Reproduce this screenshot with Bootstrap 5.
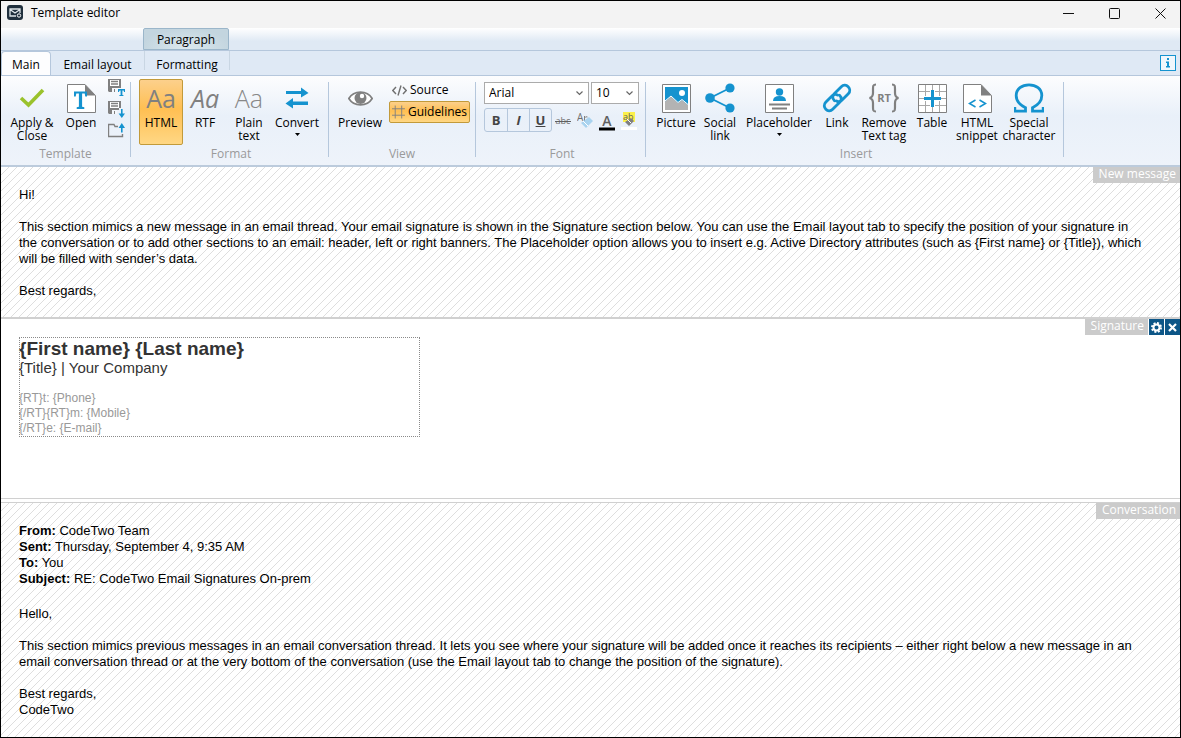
<!DOCTYPE html>
<html lang="en">
<head>
<meta charset="utf-8">
<meta name="viewport" content="width=device-width, initial-scale=1">
<title>Template editor</title>
<link href="https://cdn.jsdelivr.net/npm/bootstrap@5.3.0/dist/css/bootstrap.min.css" rel="stylesheet">
<style>
  :root { --accent:#1593cf; --icon:#808080; --rule:#b5c7dc; --ui:"Open Sans","Noto Sans",sans-serif; }
  body { font-family:var(--ui); font-size:12px; line-height:16px; color:#000; background:#fff; }
  .win { border:1px solid #000; }
  .titlebar { height:27px; background:#f3f3f3; padding:0 0 4px 6px; }
  .win-btn { width:46px; height:22px; background:none; border:0; padding:0 0 0 6px; }
  .context-row { height:23px; background:linear-gradient(#fff,#dfe9f4 60%); border-bottom:1px solid var(--rule); padding-left:142px; }
  .context-tab { width:86px; padding-top:3px; border:1px solid #9bb6ca; border-radius:2px 2px 0 0; background:radial-gradient(ellipse at 50% 100%,#dce9ee,#c3d5df 75%); }
  .tab-row { height:25px; background:#dfe9f5; border-bottom:1px solid var(--rule); }
  .rib-tab { color:#000; height:24px; padding-top:6px; }
  .tab-main { width:50px; background:#fdfdfe; border:1px solid var(--rule); border-bottom:0; border-radius:4px 4px 0 0; padding-top:5px; }
  .tab-mail { width:93px; }
  .tab-format { width:86px; height:19px; border:solid #c9d6e3; border-width:0 1px; }
  .info { width:16px; height:16px; border:1px solid var(--accent); background:#f0f7fc; padding:0; }
  .ribbon { height:91px; background:linear-gradient(#fdfdfe,#e9f0f9 45%,#eef3fa); border-bottom:2px solid #bccbdc; }
  .rgroup { position:relative; padding:3px 6px 3px 8px; }
  .rgroup-tight { padding-left:5px; }
  .rgroup::after { content:""; position:absolute; right:0; top:6px; bottom:8px; width:1px; background:var(--rule); }
  .rtitle { color:#9a9a9a; line-height:16px; }
  .tool { border:1px solid transparent; background:none; border-radius:2px; height:66px; padding:2px 0 0; line-height:13px; color:#000; display:flex; flex-direction:column; align-items:center; white-space:nowrap; }
  .tool .pic { height:32px; width:32px; display:flex; align-items:center; justify-content:center; margin-bottom:2px; }
  .tool.picked, .mini.picked { border-color:#c29a3a; background:linear-gradient(#fcd08c,#ffbf52 45%,#ffd784); }
  .w42 { width:42px; } .w44 { width:44px; } .w46 { width:46px; } .w52 { width:52px; } .w58 { width:58px; } .w74 { width:74px; }
  .aa { font-size:25px; line-height:32px; color:var(--icon); }
  .aa-thin { color:#888; font-weight:300; }
  .view-list { width:81px; margin-left:3px; }
  .mini { height:22px; border:1px solid transparent; border-radius:2px; background:none; padding:0 2px; gap:3px; color:#000; white-space:nowrap; }
  .plain-btn { border:0; background:none; padding:0; line-height:0; }
  .combos { gap:2px; padding-top:3px; }
  .combo { height:22px; border:1px solid #ababab; padding:0 4px; appearance:none; color:#000; background:#fff url("data:image/svg+xml,%3Csvg xmlns='http://www.w3.org/2000/svg' width='7' height='5'%3E%3Cpath d='M.5.5l3 3 3-3' fill='none' stroke='%23666' stroke-width='1.2'/%3E%3C/svg%3E") no-repeat right 5px center; }
  .combo-font { width:105px; } .combo-size { width:48px; }
  .biu { border:1px solid var(--rule); border-radius:3px; }
  .biu button { width:22px; height:22px; border:0; background:none; padding:0; color:#444; font-size:13px; }
  .biu button + button { border-left:1px solid var(--rule); }
  .fx { width:22px; height:24px; border:0; background:none; padding:0; line-height:0; }
  .pane { position:relative; font-family:"Liberation Sans",Arial,sans-serif; font-size:13px; line-height:16px; padding:20px 32px 0 18px; }
  .pane p { margin-bottom:16px; }
  .hatch { background-color:#fff; background-image:linear-gradient(135deg,transparent 45%,#dedede 50%,transparent 55%); background-size:8px 8px; }
  .pane-top { padding-bottom:2px; border-bottom:2px solid #d0d0d0; }
  .pane-sign { min-height:180px; padding-top:18px; border-bottom:1px solid #d0d0d0; margin-bottom:3px; }
  .pane-conv { border-top:1px solid #d0d0d0; }
  .pane .mail-head { margin-bottom:19px; }
  .tagline { position:absolute; top:0; right:0; font-family:var(--ui); font-size:12px; line-height:16px; height:16px; }
  .taglabel { background:#cbcbcb; color:#fff; padding:0 4px 0 6px; height:16px; line-height:14px; }
  .tagbtn { width:15px; height:16px; border:0; padding:0; margin-left:1px; background:#0d5687; line-height:0; }
  .sig { width:401px; padding:1px 0; outline:1px dotted #8a8a8a; outline-offset:-1px; color:#333; }
  .sig-name { font-size:19px; line-height:22px; font-weight:700; margin:0; }
  .sig-title { font-size:15px; line-height:16px; }
  .sig-info { font-size:12px; line-height:15px; color:#999; margin-top:15px; }
</style>
</head>
<body>
<div class="win d-flex flex-column min-vh-100">
  <header class="titlebar d-flex align-items-center">
    <svg width="16" height="15" viewBox="0 0 16 15"><rect width="16" height="15" rx="3" fill="#20303d"/><path d="M9 11H3V4h10v4M3 4.500l5 3.500 5-3.500" fill="none" stroke="#dfe6ea" stroke-width="1.300"/><circle cx="12" cy="10.500" r="1.700" fill="#20303d" stroke="#fff"/></svg>
    <span class="ps-1 ms-1">Template editor</span>
    <div class="ms-auto d-flex">
      <button class="win-btn" aria-label="Minimize"><svg width="11" height="11" viewBox="0 0 11 11"><path d="M0 5.500h11" stroke="#111"/></svg></button>
      <button class="win-btn" aria-label="Maximize"><svg width="11" height="11" viewBox="0 0 11 11"><rect x=".5" y=".5" width="10" height="10" rx="1" fill="none" stroke="#111"/></svg></button>
      <button class="win-btn" aria-label="Close"><svg width="11" height="11" viewBox="0 0 11 11"><path d="M.5.5l10 10M10.500.5l-10 10" stroke="#111"/></svg></button>
    </div>
  </header>

  <div class="context-row d-flex"><div class="context-tab text-center">Paragraph</div></div>
  <nav class="tab-row d-flex text-center">
    <a class="rib-tab tab-main text-decoration-none" href="#main">Main</a>
    <a class="rib-tab tab-mail text-decoration-none" href="#layout">Email layout</a>
    <a class="rib-tab tab-format text-decoration-none" href="#formatting">Formatting</a>
    <button class="info ms-auto me-1 mt-1 d-flex align-items-center justify-content-center" aria-label="Information"><svg width="6" height="10" viewBox="0 0 6 10"><path d="M2 0h2v2H2zM1 3.500h3V8h1v1.500H1V8h1V5H1z" fill="#1593cf"/></svg></button>
  </nav>

  <div class="ribbon d-flex">
    <section class="rgroup rgroup-tight d-flex flex-column">
      <div class="d-flex">
        <button class="tool w52"><span class="pic"><svg width="26" height="22" viewBox="0 0 26 22"><path d="M2 11l7.500 7L24 3" fill="none" stroke="#9ac22c" stroke-width="3.600"/></svg></span>Apply &amp;<br>Close</button>
        <button class="tool w46"><span class="pic"><svg width="29" height="29" viewBox="0 0 29 29"><path d="M.5.5H18l10.500 11v17H.5z" fill="#fff" stroke="#808080"/><path d="M18 .5l10.500 11H18z" fill="#808080"/><path d="M7 7.500h13v5h-1.700l-.6-3h-2.600v13.200l2.200.6V25h-7.600v-1.700l2.200-.6V9.500H9.300l-.6 3H7z" fill="#1593cf"/></svg></span>Open</button>
        <div class="d-flex flex-column gap-1 ps-1">
          <button class="plain-btn" aria-label="Save as template"><svg width="17" height="18" viewBox="0 0 17 18"><path d="M0 0h13v9H9v4H1l-1-1z" fill="#808080"/><path d="M2 1h9v6H2z" fill="#fff"/><path d="M3 2.500h7M3 5h7" stroke="#808080" stroke-width="1.500"/><path d="M4 9h5v4H7v-3H6v3H4z" fill="#f4f7fb"/><path d="M10 10h7v3h-1l-.4-1.500h-1.200V16h1v1h-4v-1h1.200v-4.500h-1L11 13h-1z" fill="#1593cf"/></svg></button>
          <button class="plain-btn" aria-label="Export"><svg width="17" height="18" viewBox="0 0 17 18"><path d="M0 0h13v7h-2v2H9v4H1l-1-1z" fill="#808080"/><path d="M2 1h9v6H2z" fill="#fff"/><path d="M3 2.500h7M3 5h7" stroke="#808080" stroke-width="1.500"/><path d="M4 9h5v4H7v-3H6v3H4z" fill="#f4f7fb"/><path d="M13 8h1.600v4.500H17L13.800 17l-3.200-4.500H13z" fill="#1593cf"/></svg></button>
          <button class="plain-btn" aria-label="Import"><svg width="17" height="15" viewBox="0 0 17 15"><path d="M10 3.500H7L6 1.500H.5v12h14V11" fill="none" stroke="#808080" stroke-width="1.400"/><path d="M13 9.500V5h-2.400l3.200-5L17 5h-2.400v4.500z" fill="#1593cf"/></svg></button>
        </div>
      </div>
      <div class="rtitle text-center mt-auto">Template</div>
    </section>

    <section class="rgroup d-flex flex-column">
      <div class="d-flex">
        <button class="tool w44 picked"><span class="pic aa">Aa</span>HTML</button>
        <button class="tool w44"><span class="pic aa fst-italic">Aa</span>RTF</button>
        <button class="tool w44"><span class="pic aa aa-thin">Aa</span>Plain<br>text</button>
        <button class="tool w52"><span class="pic"><svg width="24" height="22" viewBox="0 0 24 22"><path d="M1 4h15V.5L23.500 6 16 10.500V7H1zM23 14.500H8V11L.5 16.500 8 21.500v-3.500h15z" fill="#1593cf"/></svg></span>Convert<svg class="mt-1" width="5" height="3" viewBox="0 0 5 3"><path d="M0 0h5L2.500 3z"/></svg></button>
      </div>
      <div class="rtitle text-center mt-auto">Format</div>
    </section>

    <section class="rgroup rgroup-tight d-flex flex-column">
      <div class="d-flex">
        <button class="tool w52"><span class="pic"><svg width="25" height="17" viewBox="0 0 25 17"><path d="M.8 8.500C6 0 19 0 24.200 8.500 19 17 6 17 .8 8.500z" fill="#fff" stroke="#808080" stroke-width="1.700"/><circle cx="12.500" cy="8" r="6" fill="#808080"/><circle cx="14" cy="6" r="2.200" fill="#fff"/></svg></span>Preview</button>
        <div class="view-list d-flex flex-column">
          <button class="mini d-flex align-items-center"><svg width="15" height="11" viewBox="0 0 15 11"><path d="M4 2L.8 5.500 4 9M11 2l3.200 3.500L11 9M9 .5l-3 10" fill="none" stroke="#707070" stroke-width="1.400"/></svg>Source</button>
          <button class="mini picked d-flex align-items-center"><svg width="14" height="14" viewBox="0 0 14 14"><path d="M3.500 0v14M10.500 0v14M0 3.500h14M0 10.500h14" stroke="#808080"/></svg>Guidelines</button>
        </div>
      </div>
      <div class="rtitle text-center mt-auto">View</div>
    </section>

    <section class="rgroup d-flex flex-column">
      <div class="combos d-flex">
        <select class="combo combo-font" aria-label="Font"><option>Arial</option></select>
        <select class="combo combo-size" aria-label="Font size"><option>10</option></select>
      </div>
      <div class="d-flex mt-1">
        <div class="biu d-flex"><button class="fw-bold">B</button><button class="fw-bold fst-italic">I</button><button class="fw-bold text-decoration-underline">U</button></div>
        <button class="fx" aria-label="Strikethrough"><svg width="18" height="18" viewBox="0 0 18 18"><text x="9" y="13" text-anchor="middle" font-size="9" fill="#707070">abc</text><path d="M1 10.500h16" stroke="#606060"/></svg></button>
        <button class="fx" aria-label="Clear formatting"><svg width="16" height="20" viewBox="0 0 16 20"><text x="0" y="11" font-size="10" fill="#707070">A</text><path d="M7.500 6v5M7.500 8q1-2 3-1" stroke="#808080" fill="none"/><path d="M12 7l4 4-7 7-5-5z" fill="#a9d3ef"/><path d="M6 11l5 5" stroke="#fff"/></svg></button>
        <button class="fx" aria-label="Text colour"><svg width="16" height="22" viewBox="0 0 16 22"><text x="8" y="17" text-anchor="middle" font-size="14" font-weight="600" fill="#606060">A</text><path d="M0 18.500h16v3H0z"/></svg></button>
        <button class="fx" aria-label="Highlight"><svg width="16" height="22" viewBox="0 0 16 22"><path d="M2 3h12v10H2z" fill="#fcf04a"/><text x="2" y="11" font-size="9" fill="#606060">ab</text><path d="M10 9l3 3-5 5-4-4z" fill="#808080"/><path d="M6 10l4 4" stroke="#fff"/><path d="M0 18h16v3H0z" fill="#fff"/></svg></button>
      </div>
      <div class="rtitle text-center mt-auto">Font</div>
    </section>

    <section class="rgroup d-flex flex-column">
      <div class="d-flex">
        <button class="tool w44"><span class="pic"><svg width="29" height="29" viewBox="0 0 29 29"><path d="M.5.5h28v28H.5z" fill="#fff" stroke="#808080"/><path d="M3 3h23v23H3z" fill="#1593cf"/><circle cx="20" cy="9" r="3" fill="#fff"/><path d="M3 17.500l6-5 7 6.500 4-3 6 5V26H3z" fill="#b3b3b3"/><path d="M3 17l6-5 7 6.500 4-3 6 5" fill="none" stroke="#fff"/></svg></span>Picture</button>
        <button class="tool w44"><span class="pic"><svg width="30" height="30" viewBox="0 0 30 30"><path d="M25 5L5 15l20 10" fill="none" stroke="#1593cf" stroke-width="1.800"/><g fill="#1593cf"><circle cx="25" cy="5" r="4.600"/><circle cx="5" cy="15" r="4.800"/><circle cx="25" cy="25" r="4.600"/></g></svg></span>Social<br>link</button>
        <button class="tool w74"><span class="pic"><svg width="29" height="29" viewBox="0 0 29 29"><path d="M.5.5h28v28H.5z" fill="#fff" stroke="#808080"/><circle cx="14.500" cy="8" r="3.700" fill="#1593cf"/><path d="M8 17q0-5 6.500-5t6.500 5z" fill="#1593cf"/><path d="M4 20.500h21M7 24.500h15" stroke="#808080" stroke-width="1.800"/></svg></span>Placeholder<svg class="mt-1" width="5" height="3" viewBox="0 0 5 3"><path d="M0 0h5L2.500 3z"/></svg></button>
        <button class="tool w42"><span class="pic"><svg width="30" height="30" viewBox="0 0 30 30"><g fill="none" stroke="#1593cf" stroke-width="2.800" stroke-linecap="round"><path d="M12.500 17.800c-2.300-2.300-2.300-5 0-7.300l6.800-6.800c4.500-4.500 11.500 2.500 7 7l-6.500 6.500c-1.500 1.500-3.800 1.700-5.300.8"/><path d="M17.500 12.200c2.300 2.300 2.300 5 0 7.300l-6.800 6.800c-4.500 4.500-11.500-2.500-7-7l6.500-6.500c1.500-1.500 3.800-1.700 5.300-.8"/></g></svg></span>Link</button>
        <button class="tool w52"><span class="pic"><svg width="30" height="30" viewBox="0 0 30 30"><path d="M7 1.500C4 1.500 4 3 4 6v4c0 3-1 4.500-3.500 5C3 15.500 4 17 4 20v4c0 3 0 4.500 3 4.500M23 1.500c3 0 3 1.500 3 4.500v4c0 3 1 4.500 3.500 5-2.500.5-3.500 2-3.500 5v4c0 3 0 4.500-3 4.500" fill="none" stroke="#808080" stroke-width="2.200"/><text x="15" y="19" text-anchor="middle" font-size="11" font-weight="700" fill="#808080">RT</text></svg></span>Remove<br>Text tag</button>
        <button class="tool w44"><span class="pic"><svg width="29" height="29" viewBox="0 0 29 29"><path d="M.5.5h28v28H.5z" fill="#fff" stroke="#808080"/><path d="M7.500 1v27M21.500 1v27M1 7.500h27M1 21.500h27M14.500 1v27M1 14.500h27" stroke="#a8a8a8"/><path d="M14.500 6v17M6 14.500h17" stroke="#fff" stroke-width="5"/><path d="M14.500 6v17M6 14.500h17" stroke="#1593cf" stroke-width="3"/></svg></span>Table</button>
        <button class="tool w46"><span class="pic"><svg width="29" height="29" viewBox="0 0 29 29"><path d="M.5.5H18l10.500 11v17H.5z" fill="#fff" stroke="#808080"/><path d="M18 .5l10.500 11H18z" fill="#808080"/><path d="M12.500 16l-6 3.500 6 3.500M16.500 16l6 3.500-6 3.500" fill="none" stroke="#1593cf" stroke-width="1.500"/></svg></span>HTML<br>snippet</button>
        <button class="tool w58"><span class="pic"><svg width="30" height="30" viewBox="0 0 30 30"><path d="M.8 24v4.200h10.700v-3.500C6 22 2.200 18 2.200 12.500 2.200 6 8 1.800 15 1.800S27.800 6 27.800 12.500c0 5.500-3.800 9.500-9.300 12.200v3.500h10.700V24" fill="none" stroke="#1593cf" stroke-width="2.800"/></svg></span>Special<br>character</button>
      </div>
      <div class="rtitle text-center mt-auto">Insert</div>
    </section>
  </div>

  <section class="pane pane-top hatch">
    <div class="tagline d-flex"><span class="taglabel">New message</span></div>
    <p>Hi!</p>
    <p>This section mimics a new message in an email thread. Your email signature is shown in the Signature section below. You can use the Email layout tab to specify the position of your signature in the conversation or to add other sections to an email: header, left or right banners. The Placeholder option allows you to insert e.g. Active Directory attributes (such as {First name} or {Title}), which will be filled with sender’s data.</p>
    <p>Best regards,</p>
  </section>

  <section class="pane pane-sign">
    <div class="tagline d-flex"><span class="taglabel">Signature</span>
      <button class="tagbtn" aria-label="Signature settings"><svg width="11" height="11" viewBox="0 0 11 11"><circle cx="5.500" cy="5.500" r="4.500" fill="none" stroke="#fff" stroke-width="2" stroke-dasharray="2 1.530"/><circle cx="5.500" cy="5.500" r="3" fill="none" stroke="#fff" stroke-width="2"/></svg></button>
      <button class="tagbtn" aria-label="Remove signature"><svg width="9" height="9" viewBox="0 0 9 9"><path d="M1 1l7 7M8 1L1 8" stroke="#fff" stroke-width="2.200"/></svg></button>
    </div>
    <div class="sig">
      <h1 class="sig-name">{First name} {Last name}</h1>
      <div class="sig-title">{Title} | Your Company</div>
      <div class="sig-info">{RT}t: {Phone}<br>{/RT}{RT}m: {Mobile}<br>{/RT}e: {E-mail}</div>
    </div>
  </section>

  <section class="pane pane-conv hatch flex-grow-1">
    <div class="tagline d-flex"><span class="taglabel">Conversation</span></div>
    <p class="mail-head"><b>From:</b> CodeTwo Team<br><b>Sent:</b> Thursday, September 4, 9:35 AM<br><b>To:</b> You<br><b>Subject:</b> RE: CodeTwo Email Signatures On-prem</p>
    <p>Hello,</p>
    <p>This section mimics previous messages in an email conversation thread. It lets you see where your signature will be added once it reaches its recipients – either right below a new message in an email conversation thread or at the very bottom of the conversation (use the Email layout tab to change the position of the signature).</p>
    <p>Best regards,<br>CodeTwo</p>
  </section>
</div>
<script src="https://cdn.jsdelivr.net/npm/bootstrap@5.3.0/dist/js/bootstrap.bundle.min.js"></script>
</body>
</html>
